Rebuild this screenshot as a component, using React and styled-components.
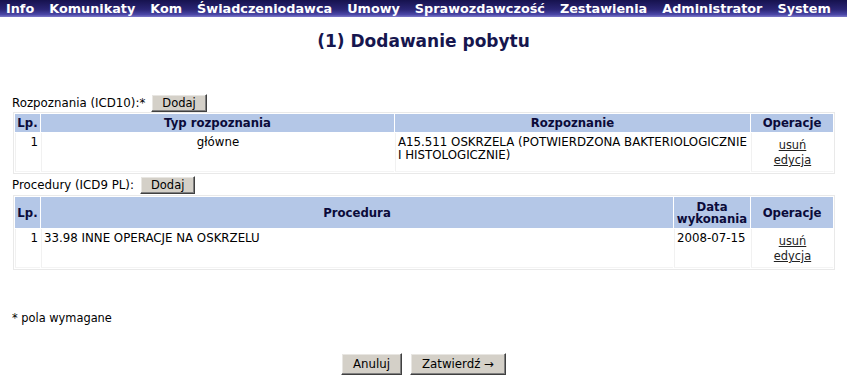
import React from "react";
import styled, { createGlobalStyle } from "styled-components";

const Global = createGlobalStyle`
  html, body { margin: 0; padding: 0; background: #ffffff; }
  body { font-family: "DejaVu Sans", Verdana, sans-serif; color: #000; }
`;

const Page = styled.div`
  width: 847px;
  min-height: 382px;
  display: flex;
  flex-direction: column;
`;

const NavBar = styled.nav`
  height: 17px;
  display: flex;
  align-items: center;
  gap: 15px;
  padding-left: 6px;
  background: linear-gradient(#16124e 0%, #2a2574 55%, #4a46a6 85%, #7c78c8 100%);
`;

const NavItem = styled.a`
  font-size: 12.8px;
  font-weight: bold;
  color: #ffffff;
  text-decoration: none;
  white-space: nowrap;
  line-height: 17px;
`;

const Title = styled.h1`
  margin: 13px 0 0;
  font-size: 17px;
  line-height: 22px;
  font-weight: bold;
  color: #16164e;
  text-align: center;
`;

const Section = styled.section`
  display: flex;
  flex-direction: column;
  margin-top: ${(p) => p.$top}px;
`;

const LabelRow = styled.div`
  display: flex;
  align-items: center;
  gap: 6px;
  padding-left: 12px;
  height: 18px;
  font-size: 11.8px;
`;

const Button = styled.button`
  font-family: "DejaVu Sans", Verdana, sans-serif;
  font-size: ${(p) => p.$fs || 11.5}px;
  color: #000;
  background: #d4d0c8;
  height: ${(p) => p.$h}px;
  padding: 0 ${(p) => p.$px}px;
  border: 1px solid;
  border-color: #ffffff #404040 #404040 #ffffff;
  box-shadow: inset -1px -1px 0 #808080, inset 1px 1px 0 #e8e6e2;
  cursor: pointer;
  display: inline-flex;
  align-items: center;
  justify-content: center;
`;

const Table = styled.table`
  margin: ${(p) => p.$top || 0}px 13px 0;
  width: 822px;
  table-layout: fixed;
  border-collapse: separate;
  border-spacing: 1px;
  border: 1px solid #e9e9e9;
  background: #ffffff;
`;

const TH = styled.th`
  width: ${(p) => (p.$w ? `${p.$w}px` : "auto")};
  background: #b4c7e7;
  color: #0b0b3a;
  font-size: 11.7px;
  font-weight: bold;
  text-align: ${(p) => p.$align || "center"};
  line-height: ${(p) => p.$lh || 14}px;
  padding: 2px 2px;
  height: ${(p) => (p.$h ? `${p.$h}px` : "auto")};
  box-sizing: border-box;
  vertical-align: middle;
`;

const TD = styled.td`
  font-size: 11.8px;
  line-height: 13px;
  padding: 3px 2px 3px;
  vertical-align: top;
  text-align: ${(p) => p.$align || "left"};
  border-left: 1px solid #f1f1f1;
  border-bottom: 1px solid #f4f4f4;
`;

const OpsList = styled.div`
  display: flex;
  flex-direction: column;
  align-items: center;
  padding-top: 2px;
`;

const OpLink = styled.a`
  font-size: 11.4px;
  line-height: 15px;
  color: #222;
  text-decoration: underline;
`;

const Note = styled.div`
  margin-top: 41px;
  padding-left: 12px;
  font-size: 11.4px;
  line-height: 14px;
`;

const Actions = styled.div`
  margin-top: 28px;
  display: flex;
  justify-content: center;
  gap: 8px;
`;

const navItems = [
  "Info",
  "Komunikaty",
  "Kom",
  "Świadczeniodawca",
  "Umowy",
  "Sprawozdawczość",
  "Zestawienia",
  "Administrator",
  "System",
];

function Ops() {
  return (
    <OpsList>
      <OpLink href="#">usuń</OpLink>
      <OpLink href="#">edycja</OpLink>
    </OpsList>
  );
}

export default function App() {
  return (
    <Page>
      <Global />
      <NavBar>
        {navItems.map((n) => (
          <NavItem key={n} href="#">
            {n}
          </NavItem>
        ))}
      </NavBar>
      <Title>(1) Dodawanie pobytu</Title>

      <Section $top={42}>
        <LabelRow>
          <span>Rozpoznania (ICD10):*</span>
          <Button $h={18} $px={10}>Dodaj</Button>
        </LabelRow>
        <Table $top={0}>
          <thead>
            <tr>
              <TH $w={25}>Lp.</TH>
              <TH $w={353}>Typ rozpoznania</TH>
              <TH>Rozpoznanie</TH>
              <TH $w={82}>Operacje</TH>
            </tr>
          </thead>
          <tbody>
            <tr>
              <TD $align="right">1</TD>
              <TD $align="center">główne</TD>
              <TD>A15.511 OSKRZELA (POTWIERDZONA BAKTERIOLOGICZNIE I HISTOLOGICZNIE)</TD>
              <TD $align="center">
                <Ops />
              </TD>
            </tr>
          </tbody>
        </Table>
      </Section>

      <Section $top={2}>
        <LabelRow>
          <span>Procedury (ICD9 PL):</span>
          <Button $h={18} $px={10}>Dodaj</Button>
        </LabelRow>
        <Table $top={1}>
          <thead>
            <tr>
              <TH $w={25} $h={31}>Lp.</TH>
              <TH>Procedura</TH>
              <TH $w={76} $lh={12}>Data wykonania</TH>
              <TH $w={82}>Operacje</TH>
            </tr>
          </thead>
          <tbody>
            <tr>
              <TD $align="right">1</TD>
              <TD>33.98 INNE OPERACJE NA OSKRZELU</TD>
              <TD>2008-07-15</TD>
              <TD $align="center">
                <Ops />
              </TD>
            </tr>
          </tbody>
        </Table>
      </Section>

      <Note>* pola wymagane</Note>

      <Actions>
        <Button $h={22} $px={11} $fs={11.8}>Anuluj</Button>
        <Button $h={22} $px={11} $fs={11.8}>Zatwierdź →</Button>
      </Actions>
    </Page>
  );
}
